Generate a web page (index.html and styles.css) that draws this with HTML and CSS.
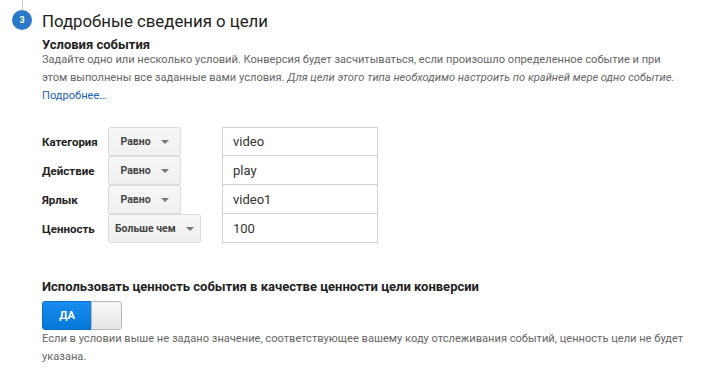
FILE: index.html
```html
<!DOCTYPE html>
<html lang="ru">
<head>
  <meta charset="UTF-8">
  <title>Подробные сведения о цели</title>
  <link rel="stylesheet" href="styles.css">
</head>
<body>
  <div class="step">
    <div class="step__rail">
      <div class="step__line"></div>
      <div class="step__num">3</div>
    </div>
    <div class="step__body">
      <h1 class="step__title">Подробные сведения о цели</h1>

      <h2 class="section__title">Условия события</h2>
      <p class="section__text">
        Задайте одно или несколько условий. Конверсия будет засчитываться, если произошло определенное событие и при этом выполнены все заданные вами условия. <em>Для цели этого типа необходимо настроить по крайней мере одно событие.</em><br>
        <a href="#" class="section__link">Подробнее…</a>
      </p>

      <div class="conditions">
        <div class="condition">
          <span class="condition__label">Категория</span>
          <div class="condition__op"><button class="select">Равно<span class="select__arrow"></span></button></div>
          <input class="condition__value" type="text" value="video">
        </div>
        <div class="condition">
          <span class="condition__label">Действие</span>
          <div class="condition__op"><button class="select">Равно<span class="select__arrow"></span></button></div>
          <input class="condition__value" type="text" value="play">
        </div>
        <div class="condition">
          <span class="condition__label">Ярлык</span>
          <div class="condition__op"><button class="select">Равно<span class="select__arrow"></span></button></div>
          <input class="condition__value" type="text" value="video1">
        </div>
        <div class="condition">
          <span class="condition__label">Ценность</span>
          <div class="condition__op"><button class="select">Больше чем<span class="select__arrow"></span></button></div>
          <input class="condition__value" type="text" value="100">
        </div>
      </div>

      <h2 class="section__title section__title--value">Использовать ценность события в качестве ценности цели конверсии</h2>
      <div class="toggle">
        <span class="toggle__on">ДА</span>
        <span class="toggle__knob"></span>
      </div>
      <p class="section__text">
        Если в условии выше не задано значение, соответствующее вашему коду отслеживания событий, ценность цели не будет указана.
      </p>
    </div>
  </div>
</body>
</html>
```

FILE: styles.css
```css
html {
  box-sizing: border-box;
  background: #fff;
}

*, *:before, *:after {
  box-sizing: inherit;
}

body {
  margin: 0;
  font-family: Roboto, "Liberation Sans", Arial, sans-serif;
  color: #222;
}

.step {
  display: flex;
  width: 715px;
  height: 376px;
  overflow: hidden;
}

.step__rail {
  display: flex;
  flex-direction: column;
  align-items: center;
  width: 20px;
  margin-left: 12px;
  margin-right: 10px;
}

.step__line {
  width: 1px;
  height: 10px;
  background: #c8c8c8;
}

.step__num {
  width: 20px;
  height: 20px;
  border-radius: 50%;
  background: #2a79c8;
  color: #fff;
  font-size: 9px;
  font-weight: 700;
  line-height: 20px;
  text-align: center;
}

.step__body {
  width: 645px;
  padding-top: 10px;
}

.step__title {
  margin: 0;
  font-size: 16.8px;
  font-weight: 400;
  line-height: 22px;
  color: #222;
}

.section__title {
  margin: 6px 0 0;
  font-size: 13px;
  font-weight: 700;
  line-height: 13px;
  color: #222;
}

.section__title--value {
  margin-top: 35px;
  line-height: 18px;
}

.section__text {
  margin: 0;
  font-size: 11.1px;
  line-height: 18px;
  color: #666;
}

.section__link {
  color: #1a62b5;
  text-decoration: none;
}

/* Conditions */
.conditions {
  margin-top: 22px;
}

.condition {
  display: flex;
  align-items: center;
  height: 29px;
}

.condition__label {
  width: 66px;
  font-size: 11.5px;
  font-weight: 700;
  color: #222;
}

.condition__op {
  width: 114px;
}

.select {
  display: flex;
  align-items: center;
  justify-content: center;
  min-width: 73px;
  height: 29px;
  padding: 0 6px;
  border: 1px solid #dcdcdc;
  border-radius: 2px;
  background: linear-gradient(#f6f6f6, #f0f0f0);
  font-family: Roboto, "Liberation Sans", Arial, sans-serif;
  font-size: 10.5px;
  font-weight: 700;
  color: #444;
  cursor: pointer;
}

.select__arrow {
  width: 0;
  height: 0;
  margin-left: 10px;
  border-left: 4px solid transparent;
  border-right: 4px solid transparent;
  border-top: 4px solid #777;
}

.condition__value {
  width: 156px;
  height: 29px;
  padding: 0 10px;
  border: 1px solid #d0d0d0;
  border-top: 0;
  font-family: Roboto, "Liberation Sans", Arial, sans-serif;
  font-size: 13px;
  color: #333;
  outline: 0;
}

.condition:first-child .condition__value {
  border-top: 1px solid #d0d0d0;
}

/* Toggle */
.toggle {
  display: flex;
  width: 80px;
  height: 29px;
  margin-top: 5px;
  border-radius: 3px;
  overflow: hidden;
}

.toggle__on {
  width: 49px;
  background: linear-gradient(#1a8df0, #0278d8);
  border: 1px solid #0a6cc4;
  border-right: 0;
  border-radius: 3px 0 0 3px;
  color: #fff;
  font-size: 11px;
  font-weight: 700;
  line-height: 27px;
  text-align: center;
}

.toggle__knob {
  flex: 1;
  background: linear-gradient(#f8f8f8, #e6e6e6);
  border: 1px solid #b8b8b8;
  border-radius: 0 3px 3px 0;
}
```
